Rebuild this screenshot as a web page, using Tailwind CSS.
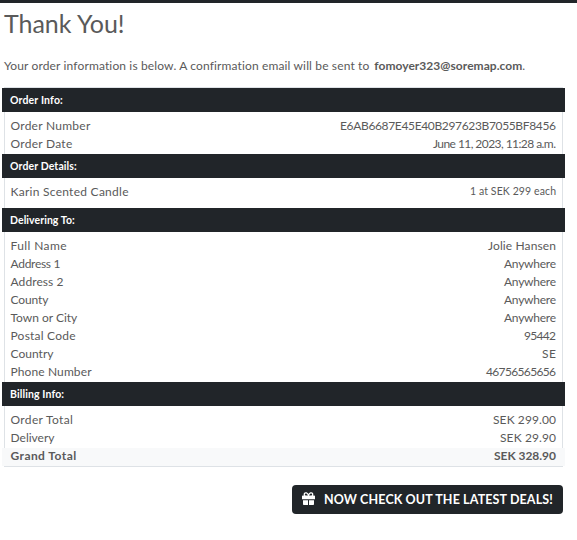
<!DOCTYPE html>
<html lang="en">
<head>
<meta charset="utf-8">
<title>Thank You</title>
<script src="https://cdn.jsdelivr.net/npm/@tailwindcss/browser@4"></script>
</head>
<body class="h-[540px] overflow-hidden bg-white font-[Lato,sans-serif] text-[12px] leading-4 text-[#5a5a5a]">
<div class="h-[3px] bg-[#212529]"></div>
<main class="w-[565px]">
  <h1 class="flex h-[53px] pl-1 pt-[4px] text-[25px] leading-[32px]"><span data-w="121.5" data-f="25px Lato">Thank You!</span></h1>
  <p class="flex h-[31px] pl-1 pt-[2px] whitespace-pre"><span data-w="367">Your order information is below. A confirmation email will be sent to</span><span class="ml-[5px] font-bold" data-w="148" data-f="bold 12px Lato">fomoyer323@soremap.com</span><span>.</span></p>
  <section class="ml-1 w-[559px] border border-[#dee2e6]" id="order"></section>
  <div class="flex justify-end pr-[2px] pt-[18px]">
    <a class="flex h-[29px] w-[271px] items-center rounded-[4px] bg-[#212529] pl-[10px] text-white">
      <svg class="mr-[9px] mb-[2px] h-[13px] w-[13px]" viewBox="0 0 13 13" fill="#fff"><path fill-rule="evenodd" d="M1 8.200h5v4.800H1.800a.8.800 0 0 1-.8-.8zM7 8.200h5v4a.8.800 0 0 1-.8.800H7zM.8 3.400h1.100C1.100 1.700 2 .2 3.800.2 5 .2 5.800.8 6.500 1.900 7.200.8 8 .2 9.200.2c1.800 0 2.700 1.500 1.900 3.200h1.100a.8.800 0 0 1 .8.800v3H0v-3a.8.800 0 0 1 .8-.8zM3.800 1.500a.95.950 0 0 0 0 1.900h2.100C5.200 2.100 4.600 1.500 3.800 1.500zM9.200 1.500c-.8 0-1.400.6-2.100 1.900h2.100a.95.950 0 0 0 0-1.900z"/></svg>
      <span class="text-[12.500px] font-bold" data-w="230" data-f="bold 12.500px Lato">NOW CHECK OUT THE LATEST DEALS!</span>
    </a>
  </div>
</main>
<script>
const groups = [
  ['Order Info:', 53, [['Order Number', 80, 'E6AB6687E45E40B297623B7055BF8456', 216], ['Order Date', 62, 'June 11, 2023, 11:28 a.m.', 123]]],
  ['Order Details:', 67, [['Karin Scented Candle', 118, '1 at SEK 299 each', 86]]],
  ['Delivering To:', 65, [['Full Name', 56, 'Jolie Hansen', 68], ['Address 1', 50, 'Anywhere', 52], ['Address 2', 53, 'Anywhere', 52], ['County', 38, 'Anywhere', 52], ['Town or City', 67, 'Anywhere', 52], ['Postal Code', 65, '95442', 32], ['Country', 43, 'SE', 14], ['Phone Number', 81, '46756565656', 70]]],
  ['Billing Info:', 54, [['Order Total', 63, 'SEK 299.00', 63], ['Delivery', 44, 'SEK 29.90', 56], ['Grand Total', 66, 'SEK 328.90', 62]]]
];
document.getElementById('order').innerHTML = groups.map(([title, tw, rows]) =>
  `<h2 class="-mx-[3px] flex h-6 items-center bg-[#212529] pb-px pl-[8px] text-[10.500px] font-bold text-white"><span data-w="${tw}" data-f="bold 10.500px Lato">${title}</span></h2>
  <div class="pt-[6px] ${rows.length === 1 ? 'pb-[6px]' : ''}">` + rows.map(([a, aw, b, bw]) => {
    const total = a === 'Grand Total', small = b.startsWith('1 at');
    const font = total ? 'bold 12px Lato' : '12px Lato';
    return `<div class="-mx-[3px] flex h-[18px] justify-between pl-[8.500px] pr-[9px] ${total ? 'bg-[#f8f9fa] font-bold' : ''}"><span data-w="${aw}" data-f="${font}">${a}</span><span class="${small ? 'text-[10.500px] leading-[14px]' : ''}" data-w="${bw}" data-f="${small ? '10.500px Lato' : font}">${b}</span></div>`;
  }).join('') + '</div>').join('');

// Space each label's letters to its intended measure.
const ctx = document.createElement('canvas').getContext('2d');
document.querySelectorAll('[data-w]').forEach(el => {
  ctx.font = el.dataset.f || '12px Lato';
  const s = (el.dataset.w - ctx.measureText(el.textContent).width) / (el.textContent.length - 1);
  el.style.whiteSpace = 'nowrap';
  el.style.letterSpacing = s + 'px';
  el.style.marginRight = -s + 'px';
});
</script>
</body>
</html>
